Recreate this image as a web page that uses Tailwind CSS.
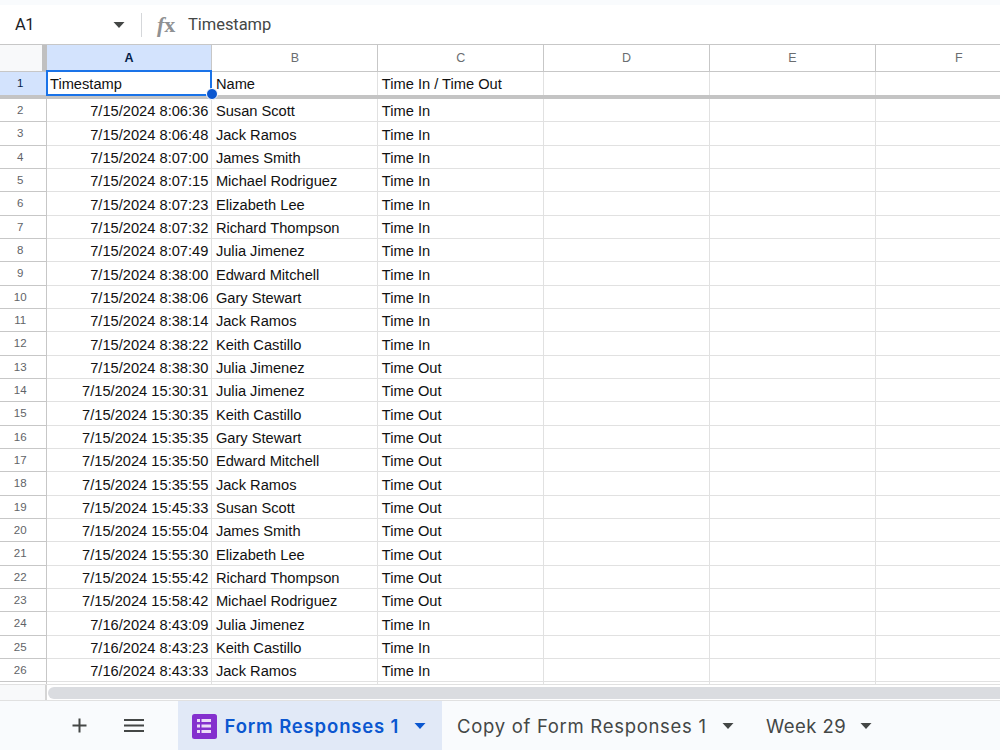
<!DOCTYPE html>
<html lang="en">
<head>
    <meta charset="UTF-8">
    <meta name="viewport" content="width=device-width, initial-scale=1.0">
    <title>Form Responses</title>
    <script src="https://cdn.jsdelivr.net/npm/@tailwindcss/browser@4"></script>
</head>
<body class="h-screen overflow-hidden bg-white font-['Liberation_Sans',Arial,sans-serif]">
    <div class="flex h-[750px] w-[1000px] flex-col overflow-hidden">

        <!-- Formula bar -->
        <header class="flex h-[45px] shrink-0 items-center border-t-[5px] border-b border-t-[#f9fbfd] border-b-[#c7c7c7] font-[Roboto,sans-serif] text-[#444746]">
            <div class="flex w-[125px] items-center justify-between pl-[15px]">
                <span class="pt-[2px] text-[16.5px] tracking-[-0.5px] text-[#202124]">A1</span>
                <svg class="h-[6px] w-[12px]" viewBox="0 0 12 6" fill="#444746"><path d="M0.5 0h11L6 6z"/></svg>
            </div>
            <div class="ml-[16px] h-[24px] w-px bg-[#d5d7da]"></div>
            <span class="ml-[15px] w-[20px] pt-px font-['Liberation_Serif',serif] text-[22px] leading-none font-bold whitespace-nowrap text-[#8f9193]"><i>f</i>x</span>
            <span class="ml-[11px] pt-[2px] text-[16.5px] tracking-[-0.05px]">Timestamp</span>
        </header>

        <!-- Column letters -->
        <div class="flex h-[27px] shrink-0 border-b border-[#c7c7c7] text-[12.5px] text-[#6a6d70]">
            <div class="w-[46.5px] shrink-0 border-r-[5px] border-[#c0c0c0] bg-[#f8f9fa]"></div>
            <div class="flex w-[165.9px] shrink-0 items-center justify-center border-r border-[#c7c7c7] bg-[#d3e3fd] font-bold text-[#041e49]">A</div>
            <div class="flex w-[165.9px] shrink-0 items-center justify-center border-r border-[#c7c7c7]">B</div>
            <div class="flex w-[165.9px] shrink-0 items-center justify-center border-r border-[#c7c7c7]">C</div>
            <div class="flex w-[165.9px] shrink-0 items-center justify-center border-r border-[#c7c7c7]">D</div>
            <div class="flex w-[165.9px] shrink-0 items-center justify-center border-r border-[#c7c7c7]">E</div>
            <div class="flex w-[165.9px] shrink-0 items-center justify-center">F</div>
        </div>

        <!-- Frozen header row -->
        <div class="relative flex h-[27px] shrink-0 border-b-4 border-[#c4c4c4] text-[14.67px] text-[#111]">
            <div class="flex w-[46.5px] shrink-0 items-center justify-center border-r border-[#c7c7c7] bg-[#d3e3fd] pr-[5px] text-[11.5px] text-[#041e49]">1</div>
            <div class="flex w-[165.9px] shrink-0 items-center border-r border-[#e1e1e1] pt-px pl-[3.5px]">Timestamp</div>
            <div class="flex w-[165.9px] shrink-0 items-center border-r border-[#e1e1e1] pt-px pl-[3.5px]">Name</div>
            <div class="flex w-[165.9px] shrink-0 items-center border-r border-[#e1e1e1] pt-px pl-[3.5px]">Time In / Time Out</div>
            <div class="w-[165.9px] shrink-0 border-r border-[#e1e1e1]"></div>
            <div class="w-[165.9px] shrink-0 border-r border-[#e1e1e1]"></div>
            <!-- Selection outline and fill handle -->
            <div class="absolute -top-[2px] left-[46px] h-[26px] w-[166px] border-2 border-[#1a73e8]"></div>
            <div class="absolute top-[16px] left-[206px] size-[12px] rounded-full border border-white bg-[#0b57d0]"></div>
        </div>

        <!-- Data rows -->
        <main id="rows" class="h-[585px] shrink-0 overflow-hidden text-[14.67px] text-[#111]"></main>

        <!-- Horizontal scrollbar -->
        <div class="flex h-[17px] shrink-0 border-t border-b border-[#e1e1e1]">
            <div class="w-[47px] shrink-0 border-r-2 border-[#d5d5d5] bg-[#f8f9fa]"></div>
            <div class="mt-[2px] ml-[1px] h-[12px] grow rounded-l-full bg-[#dadce0]"></div>
        </div>

        <!-- Sheet tabs -->
        <footer class="flex grow items-stretch bg-[#f9fbfd] font-[Inter,sans-serif] text-[18.5px] text-[#444746]">
            <div class="flex w-[177.5px] shrink-0 items-center pl-[72px]">
                <svg class="size-[15px]" viewBox="0 0 15 15" fill="none" stroke="#444746" stroke-width="2"><path d="M7.5 0.5v14M0.5 7.5h14"/></svg>
                <svg class="ml-[37px] h-[13px] w-[20px]" viewBox="0 0 20 13" fill="none" stroke="#444746" stroke-width="2"><path d="M0 1h20M0 6.5h20M0 12h20"/></svg>
            </div>
            <div class="flex w-[264px] shrink-0 items-center bg-[#e1e9f7] pt-px pl-[14px] text-[#0b57d0]">
                <svg class="size-[25px]" viewBox="0 0 25 25"><rect width="25" height="25" rx="2.5" fill="#8430ce"/><path d="M5 5h3v3H5zM9.5 5H19v3H9.5zM5 10.5h3v3H5zM9.5 10.5H19v3H9.5zM5 16h3v3H5zM9.5 16H19v3H9.5z" fill="#ecdcf8"/></svg>
                <span class="ml-[8px] w-[176px] pt-[2px] font-semibold whitespace-nowrap tracking-[0.85px]">Form Responses 1</span>
                <svg class="ml-[13px] h-[6px] w-[12px]" viewBox="0 0 12 6" fill="#0b57d0"><path d="M0.5 0h11L6 6z"/></svg>
            </div>
            <div class="flex w-[309px] shrink-0 items-center pt-px pl-[15.5px]">
                <span class="w-[252px] pt-[2px] whitespace-nowrap tracking-[0.7px]">Copy of Form Responses 1</span>
                <svg class="ml-[13px] h-[6px] w-[12px]" viewBox="0 0 12 6" fill="#444746"><path d="M0.5 0h11L6 6z"/></svg>
            </div>
            <div class="flex items-center pt-px pl-[15.5px]">
                <span class="w-[81px] pt-[2px] whitespace-nowrap tracking-[0.45px]">Week 29</span>
                <svg class="ml-[13px] h-[6px] w-[12px]" viewBox="0 0 12 6" fill="#444746"><path d="M0.5 0h11L6 6z"/></svg>
            </div>
        </footer>
    </div>

    <script>
        const responses = [
            ['7/15/2024 8:06:36', 'Susan Scott', 'Time In'],
            ['7/15/2024 8:06:48', 'Jack Ramos', 'Time In'],
            ['7/15/2024 8:07:00', 'James Smith', 'Time In'],
            ['7/15/2024 8:07:15', 'Michael Rodriguez', 'Time In'],
            ['7/15/2024 8:07:23', 'Elizabeth Lee', 'Time In'],
            ['7/15/2024 8:07:32', 'Richard Thompson', 'Time In'],
            ['7/15/2024 8:07:49', 'Julia Jimenez', 'Time In'],
            ['7/15/2024 8:38:00', 'Edward Mitchell', 'Time In'],
            ['7/15/2024 8:38:06', 'Gary Stewart', 'Time In'],
            ['7/15/2024 8:38:14', 'Jack Ramos', 'Time In'],
            ['7/15/2024 8:38:22', 'Keith Castillo', 'Time In'],
            ['7/15/2024 8:38:30', 'Julia Jimenez', 'Time Out'],
            ['7/15/2024 15:30:31', 'Julia Jimenez', 'Time Out'],
            ['7/15/2024 15:30:35', 'Keith Castillo', 'Time Out'],
            ['7/15/2024 15:35:35', 'Gary Stewart', 'Time Out'],
            ['7/15/2024 15:35:50', 'Edward Mitchell', 'Time Out'],
            ['7/15/2024 15:35:55', 'Jack Ramos', 'Time Out'],
            ['7/15/2024 15:45:33', 'Susan Scott', 'Time Out'],
            ['7/15/2024 15:55:04', 'James Smith', 'Time Out'],
            ['7/15/2024 15:55:30', 'Elizabeth Lee', 'Time Out'],
            ['7/15/2024 15:55:42', 'Richard Thompson', 'Time Out'],
            ['7/15/2024 15:58:42', 'Michael Rodriguez', 'Time Out'],
            ['7/16/2024 8:43:09', 'Julia Jimenez', 'Time In'],
            ['7/16/2024 8:43:23', 'Keith Castillo', 'Time In'],
            ['7/16/2024 8:43:33', 'Jack Ramos', 'Time In'],
            ['', '', '']
        ];

        // Row numbers start at 2, row 1 is the frozen header
        document.getElementById('rows').innerHTML = responses.map(([time, name, status], i) => `
            <div class="flex h-[23.34px]">
                <div class="flex w-[46.5px] shrink-0 items-center justify-center border-r border-b border-[#c7c7c7] pt-px pr-[5px] text-[11.5px] text-[#5f6368]">${time ? i + 2 : ''}</div>
                <div class="flex w-[165.9px] shrink-0 items-center justify-end border-r border-b border-[#e1e1e1] pt-[2.5px] pr-[3px]">${time}</div>
                <div class="flex w-[165.9px] shrink-0 items-center border-r border-b border-[#e1e1e1] pt-[2.5px] pl-[3.5px]">${name}</div>
                <div class="flex w-[165.9px] shrink-0 items-center border-r border-b border-[#e1e1e1] pt-[2.5px] pl-[3.5px]">${status}</div>
                <div class="w-[165.9px] shrink-0 border-r border-b border-[#e1e1e1]"></div>
                <div class="w-[165.9px] shrink-0 border-r border-b border-[#e1e1e1]"></div>
                <div class="w-[165.9px] shrink-0 border-b border-[#e1e1e1]"></div>
            </div>`).join('');
    </script>
</body>
</html>
